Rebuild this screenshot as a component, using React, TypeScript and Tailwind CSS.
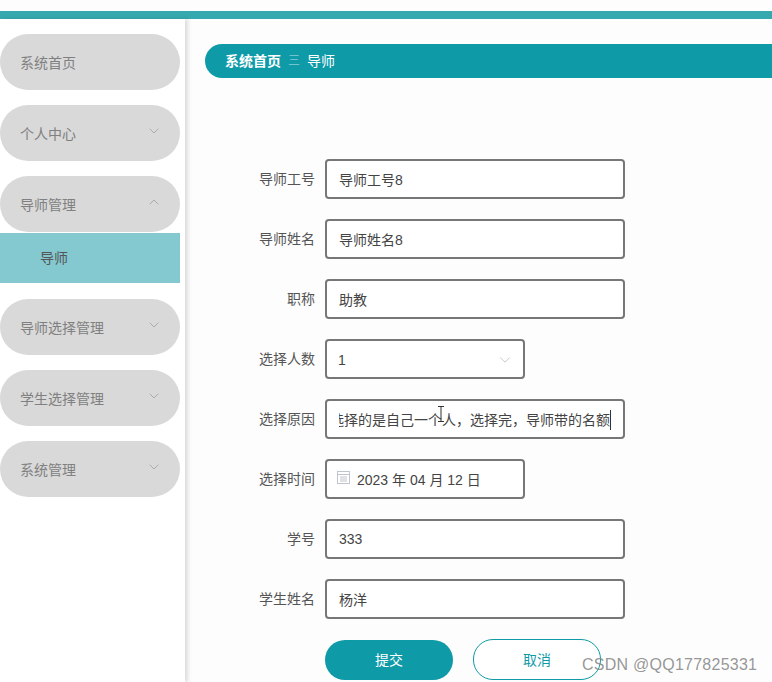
import { ChevronDown, ChevronUp } from "lucide-react";

const menu = [
  { label: "系统首页" },
  { label: "个人中心", arrow: "down" },
  { label: "导师管理", arrow: "up", child: "导师" },
  { label: "导师选择管理", arrow: "down" },
  { label: "学生选择管理", arrow: "down" },
  { label: "系统管理", arrow: "down" },
];

const font = "font-['Liberation_Sans','Noto_Sans_CJK_SC',sans-serif]";

function Row({ label, children }: { label: string; children: React.ReactNode }) {
  return (
    <div className="flex h-10 items-center">
      <label className="w-[120px] pr-[10px] text-right text-sm text-[#555]">{label}</label>
      {children}
    </div>
  );
}

function TextBox({ value }: { value: string }) {
  return (
    <div className="flex h-10 w-[300px] items-center rounded-[4px] border-2 border-[#777] bg-white pt-[2px] pl-3 text-sm text-[#444]">
      {value}
    </div>
  );
}

export default function App() {
  return (
    <div className={`${font} h-[682px] w-[772px] overflow-hidden bg-[#fdfdfd]`}>
      <div className="mt-[11px] h-2 bg-[#35a9ad]" />
      <div className="flex">
        <aside className="h-[663px] w-[185px] shrink-0 bg-white pt-[15px] shadow-[3px_0_4px_rgba(0,0,0,0.13)]">
          <ul className="flex w-[180px] flex-col gap-[15px]">
            {menu.map((item) => (
              <li key={item.label} className={item.child ? "mb-px" : ""}>
                <div className="flex h-14 items-center justify-between rounded-[28px] bg-[#d9d9d9] pr-[18px] pl-5 text-sm text-[#808080]">
                  <span className="pt-[1px]">{item.label}</span>
                  {item.arrow === "down" && <ChevronDown className="mb-[5px] h-4 w-4 text-[#a0a0a0]" strokeWidth={1.25} />}
                  {item.arrow === "up" && <ChevronUp className="mb-[5px] h-4 w-4 text-[#a0a0a0]" strokeWidth={1.25} />}
                </div>
                {item.child && (
                  <div className="mt-px flex h-[50px] items-center bg-[#84c9d0] pl-10 text-sm text-[#555]">
                    {item.child}
                  </div>
                )}
              </li>
            ))}
          </ul>
        </aside>

        <main className="relative min-w-0 flex-1 pt-[25px] pl-5">
          <div className="flex h-[34px] items-center gap-[7px] rounded-l-[17px] bg-[#0f9aa8] pl-5 text-sm text-white">
            <span className="font-bold">系统首页</span>
            <span className="text-xs font-light opacity-70">三</span>
            <span>导师</span>
          </div>

          <form className="mt-[81px] flex flex-col gap-5">
            <Row label="导师工号"><TextBox value="导师工号8" /></Row>
            <Row label="导师姓名"><TextBox value="导师姓名8" /></Row>
            <Row label="职称"><TextBox value="助教" /></Row>
            <Row label="选择人数">
              <div className="flex h-10 w-[200px] items-center justify-between rounded-[4px] border-2 border-[#777] bg-white pr-[9px] pl-[11px] text-sm text-[#444]">
                <span className="pt-[1px]">1</span>
                <ChevronDown className="mt-[2px] h-[18px] w-[18px] text-[#c0c4cc]" strokeWidth={1.25} />
              </div>
            </Row>
            <Row label="选择原因">
              <div className="relative flex h-10 w-[300px] items-center justify-end overflow-hidden rounded-[4px] border-2 border-[#777] bg-white px-3 pt-[2px] text-sm text-[#444]">
                <div className="flex justify-end overflow-hidden border-r border-[#333]">
                  <span className="whitespace-nowrap">选择的是自己一个人，选择完，导师带的名额</span>
                </div>
              </div>
            </Row>
            <Row label="选择时间">
              <div className="flex h-10 w-[200px] items-center rounded-[4px] border-2 border-[#777] bg-white pl-[10px] text-sm text-[#444]">
                <svg className="mr-[7px] mb-[3px] h-[13px] w-[13px] text-[#c0c4cc]" viewBox="0 0 13 13" fill="none" stroke="currentColor">
                  <rect x="0.5" y="0.5" width="12" height="12" />
                  <path d="M1 3.5h11M3 6h7M3 8h7M3 10h7" />
                </svg>
                <span className="pt-[1px]">2023 年 04 月 12 日</span>
              </div>
            </Row>
            <Row label="学号">
              <div className="flex h-10 w-[300px] items-center rounded-[4px] border-2 border-[#777] bg-white pl-3 text-sm text-[#444]">333</div>
            </Row>
            <Row label="学生姓名"><TextBox value="杨洋" /></Row>
          </form>

          <div className="mt-5 ml-[120px] flex items-center gap-5 text-sm">
            <button type="button" className="h-10 w-32 rounded-[20px] bg-[#0f9aa8] text-white">提交</button>
            <button type="button" className="h-[41px] w-32 rounded-[20px] border border-[#0f9aa8] bg-white text-[#0f9aa8]">取消</button>
          </div>

          {/* mouse cursor from the screen capture */}
          <svg className="absolute top-[387px] left-[251px] h-[16px] w-[10px] text-[#333]" viewBox="0 0 10 16" fill="none" stroke="currentColor" strokeWidth="1">
            <path d="M2 .5h6M5 .5v15M2 15.5h6" />
          </svg>
          <span className="absolute top-[634px] left-[397px] text-base tracking-[0.25px] whitespace-nowrap text-[#8a8a8a]/90">
            CSDN @QQ177825331
          </span>
        </main>
      </div>
    </div>
  );
}
